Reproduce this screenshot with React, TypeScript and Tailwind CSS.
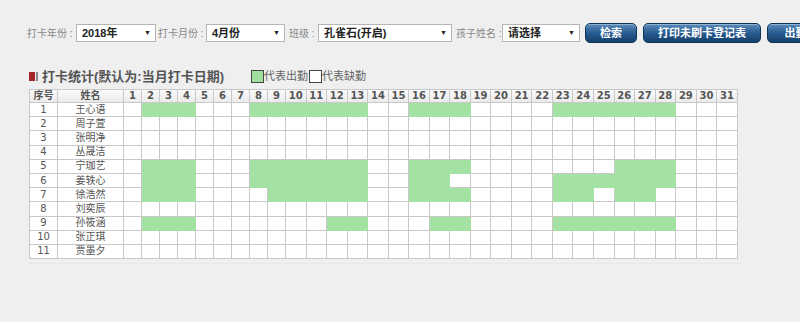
const students = [
  { no: 1, name: '王心语', days: [2, 3, 4, 8, 9, 10, 11, 12, 13, 16, 17, 18, 23, 24, 25, 26, 27, 28] },
  { no: 2, name: '周子萱', days: [] },
  { no: 3, name: '张明净', days: [] },
  { no: 4, name: '丛晟洁', days: [] },
  { no: 5, name: '宁珈艺', days: [2, 3, 4, 8, 9, 10, 11, 12, 13, 16, 17, 18, 26, 27, 28] },
  { no: 6, name: '姜轶心', days: [2, 3, 4, 8, 9, 10, 11, 12, 13, 16, 17, 23, 24, 25, 26, 27, 28] },
  { no: 7, name: '徐浩然', days: [2, 3, 4, 9, 10, 11, 12, 13, 16, 17, 18, 23, 24, 26, 27] },
  { no: 8, name: '刘奕辰', days: [] },
  { no: 9, name: '孙筱涵', days: [2, 3, 4, 12, 13, 17, 18, 23, 24, 25, 26, 27, 28] },
  { no: 10, name: '张正琪', days: [] },
  { no: 11, name: '贾墨夕', days: [] },
];

const dayList = Array.from({ length: 31 }, (_, i) => i + 1);

const filters = [
  { label: '打卡年份 :', value: '2018年', labelW: 'w-[49px]', width: 'w-[80px]', gap: 'mr-[2px]' },
  { label: '打卡月份 :', value: '4月份', labelW: 'w-[48px]', width: 'w-[79px]', gap: 'mr-[4px]' },
  { label: '班级 :', value: '孔雀石(开启)', labelW: 'w-[29px]', width: 'w-[134px]', gap: 'mr-[4px]' },
  { label: '孩子姓名 :', value: '请选择', labelW: 'w-[46px]', width: 'w-[78px]', gap: 'mr-[5px]' },
];

const buttons = [
  { text: '检索', width: 'w-[52px]' },
  { text: '打印未刷卡登记表', width: 'w-[118px]' },
  { text: '出勤统计表', width: 'w-[90px]' },
];

export default function App() {
  return (
    <div className="w-[800px] h-[322px] overflow-hidden bg-[#efefef] font-['Liberation_Sans','Noto_Sans_CJK_SC',sans-serif]">
      <div className="flex items-center pl-[27px] pt-[24px] h-[42px] whitespace-nowrap">
        {filters.map((f) => (
          <div key={f.label} className={`flex items-center ${f.gap}`}>
            <span className={`${f.labelW} text-[10px] text-[#888]`}>{f.label}</span>
            <div className={`${f.width} h-[18px] flex items-center justify-between border border-[#b5b5b5] bg-white pl-[5px] pr-[4px]`}>
              <span className="text-[11px] font-bold text-[#222]">{f.value}</span>
              <span className="text-[7px] text-[#222]">▼</span>
            </div>
          </div>
        ))}
        <div className="flex items-center gap-[6px]">
          {buttons.map((b) => (
            <div
              key={b.text}
              className={`${b.width} shrink-0 h-[20px] flex items-center justify-center rounded-[5px] border border-[#0f3256] bg-gradient-to-b from-[#5a8cbb] via-[#285d91] to-[#143f6b] text-[11px] font-bold text-white shadow-[inset_0_1px_0_rgba(255,255,255,0.35)]`}
            >
              {b.text}
            </div>
          ))}
        </div>
      </div>

      <div className="ml-[29px] mt-[27px] flex items-center h-[15px]">
        <span className="w-[6px] h-[9px] bg-[#a3262a]" />
        <span className="w-[2px] h-[9px] bg-[#8a8a8a] ml-[1px]" />
        <span className="ml-[4px] text-[13px] font-bold text-[#555]">打卡统计(默认为:当月打卡日期)</span>
        <span className="ml-[27px] w-[13px] h-[13px] border border-[#444] bg-[#9fe09f]" />
        <span className="text-[11px] text-[#666]">代表出勤</span>
        <span className="ml-[1px] w-[13px] h-[13px] border border-[#444] bg-white" />
        <span className="text-[11px] text-[#666]">代表缺勤</span>
      </div>

      <div className="mt-[5px] ml-[29px] pb-[4px] border-b border-[#e6e6e6] w-[712px]">
        <table className="table-fixed w-[709px] border-collapse bg-white text-[#555]">
          <colgroup>
            <col className="w-[28px]" />
            <col className="w-[66px]" />
            {dayList.map((d) => (
              <col key={d} className={d < 10 ? 'w-[18px]' : ''} />
            ))}
          </colgroup>
          <thead>
            <tr className="h-[13px] bg-gradient-to-b from-[#fafafa] to-[#e9e9e9]">
              <th className="border border-[#c8c8c8] text-[10px] font-bold leading-none">序号</th>
              <th className="border border-[#c8c8c8] text-[10px] font-bold leading-none">姓名</th>
              {dayList.map((d) => (
                <th key={d} className="border border-[#c8c8c8] text-[10px] font-bold leading-none font-['DejaVu_Sans',sans-serif]">
                  {d}
                </th>
              ))}
            </tr>
          </thead>
          <tbody>
            {students.map((s) => (
              <tr key={s.no} className="h-[14.2px]">
                <td className="border border-[#c8c8c8] text-center text-[10px] leading-none font-['DejaVu_Sans',sans-serif]">{s.no}</td>
                <td className="border border-[#c8c8c8] text-center text-[10px] leading-none">{s.name}</td>
                {dayList.map((d) =>
                  s.days.includes(d) ? (
                    <td key={d} className="border border-[#a3e2a3] bg-[#a3e2a3]" />
                  ) : (
                    <td key={d} className="border border-[#c8c8c8]" />
                  ),
                )}
              </tr>
            ))}
          </tbody>
        </table>
      </div>
    </div>
  );
}
